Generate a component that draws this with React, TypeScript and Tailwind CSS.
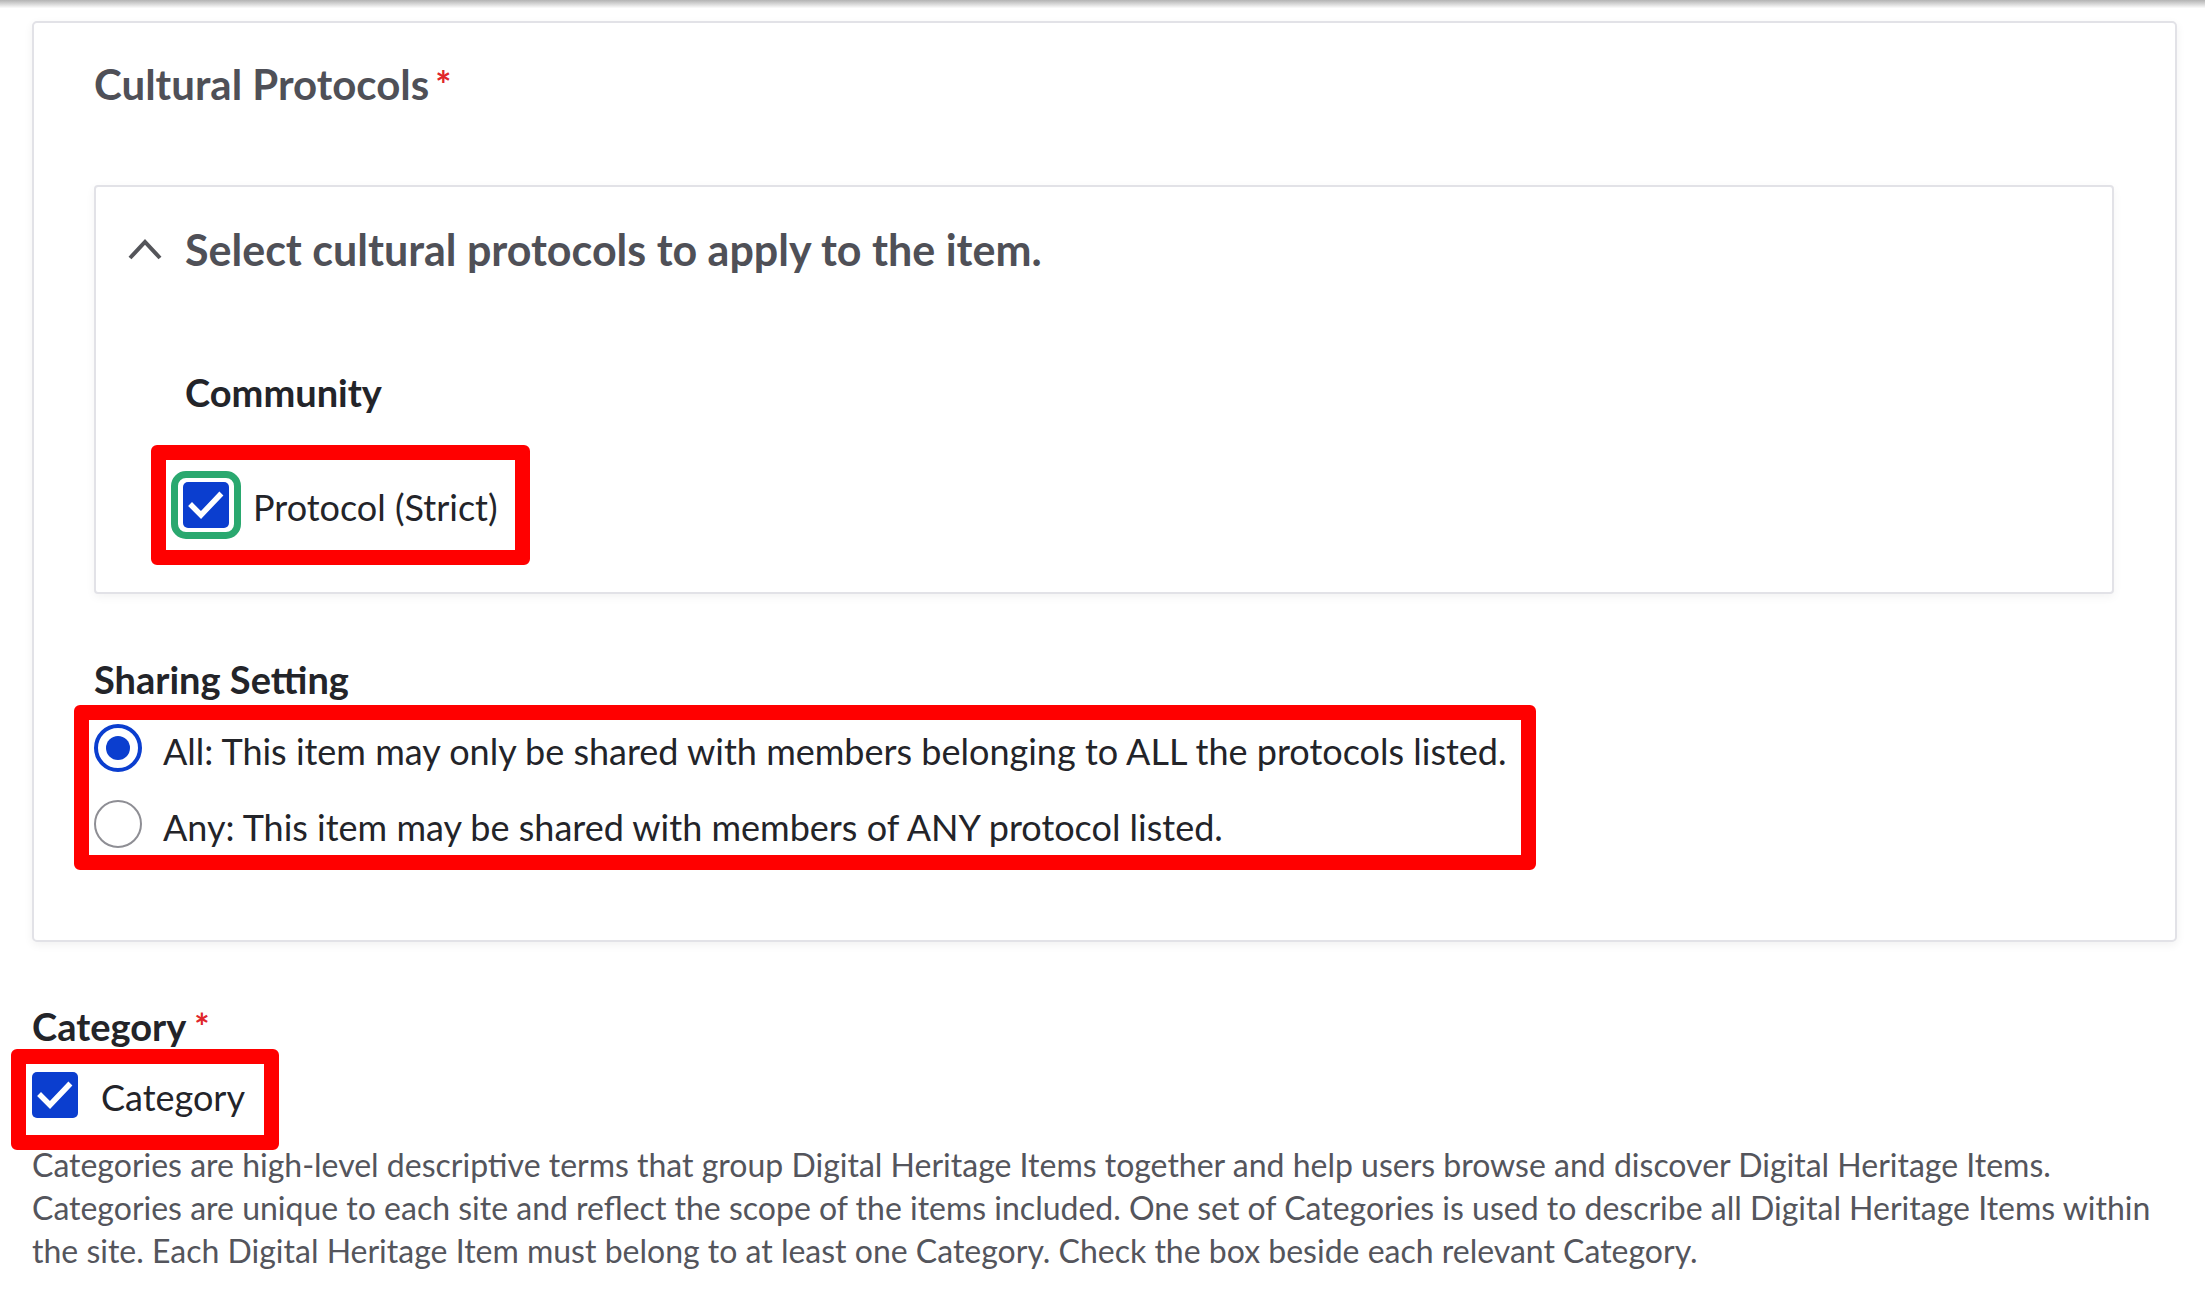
import React from 'react'

function CheckMark() {
    return (
        <svg className="w-[46px] h-[46px]" viewBox="0 0 46 46" fill="none">
            <path d="M9 24 L18 33 L36.5 13.5" stroke="white" strokeWidth={5.5} strokeLinecap="square" strokeLinejoin="miter" />
        </svg>
    )
}

function BlueCheckbox() {
    return (
        <div className="w-[46px] h-[46px] rounded-[5px] bg-[#0b3ecf] flex items-center justify-center shrink-0">
            <CheckMark />
        </div>
    )
}

function Radio({ checked }: { checked: boolean }) {
    return checked ? (
        <div className="w-[48px] h-[48px] rounded-full border-[4px] border-[#0b3ecf] flex items-center justify-center shrink-0">
            <div className="w-[24px] h-[24px] rounded-full bg-[#0b3ecf]" />
        </div>
    ) : (
        <div className="w-[48px] h-[48px] rounded-full border-2 border-[#8e8e94] shrink-0" />
    )
}

export default function App() {
    return (
        <div className="min-h-screen bg-white font-['Lato',sans-serif] text-[#232429]">
            {/* sombra de la cabecera */}
            <div className="h-[8px] bg-gradient-to-b from-[#b3b3b3] to-[#fcfcfc]" />

            <div className="pl-[32px] pr-[28px]">
                {/* Tarjeta de protocolos */}
                <section className="mt-[13px] rounded-[5px] border-2 border-[#e2e2e7] bg-white shadow-[0_3px_10px_rgba(0,0,0,0.06)] pl-[60px] pr-[61px] pt-[36px] pb-[70px]">
                    <h2 className="text-[42px] leading-[50px] font-bold text-[#4f5057]">
                        Cultural Protocols<span className="ml-[6px] text-[38px] align-top text-[#e0262b]">*</span>
                    </h2>

                    <div className="mt-[76px] rounded-[4px] border-2 border-[#e2e2e7] bg-white shadow-[0_3px_10px_rgba(0,0,0,0.05)] px-[32px] pt-[38px] pb-[27px]">
                        <div className="flex items-center gap-[23px]">
                            <svg className="w-[34px] h-[22px] shrink-0" viewBox="0 0 34 22" fill="none">
                                <polyline points="2,19 17,3 32,19" stroke="#54555a" strokeWidth={4} />
                            </svg>
                            <h3 className="text-[43px] leading-[50px] font-bold text-[#4f5057]">
                                Select cultural protocols to apply to the item.
                            </h3>
                        </div>

                        <div className="pl-[57px]">
                            <p className="mt-[94px] text-[38px] leading-[46px] font-bold">Community</p>

                            <div className="mt-[30px] -ml-[34px] w-fit rounded-[6px] border-[15px] border-[#ff0000] pl-[5px] pr-[17px] pt-[11px] pb-[11px] flex items-center gap-[12px]">
                                <div className="w-[70px] h-[68px] rounded-[15px] border-[7px] border-[#2aa86f] flex items-center justify-center">
                                    <BlueCheckbox />
                                </div>
                                <span className="text-[36px] leading-[44px] mt-[4px]">Protocol (Strict)</span>
                            </div>
                        </div>
                    </div>

                    <p className="mt-[62px] text-[38px] leading-[46px] font-bold">Sharing Setting</p>

                    <div className="mt-[3px] -ml-[20px] w-fit rounded-[6px] border-[15px] border-[#ff0000] pl-[5px] pr-[15px] pt-[3px] pb-[6px] flex flex-col gap-[26px]">
                        <div className="flex items-center gap-[21px]">
                            <Radio checked />
                            <span className="text-[36px] leading-[44px] mt-[6px]">
                                All: This item may only be shared with members belonging to ALL the protocols listed.
                            </span>
                        </div>
                        <div className="flex items-center gap-[21px]">
                            <Radio checked={false} />
                            <span className="text-[36px] leading-[44px] mt-[6px]">
                                Any: This item may be shared with members of ANY protocol listed.
                            </span>
                        </div>
                    </div>
                </section>

                {/* Categoría */}
                <p className="mt-[61px] text-[38px] leading-[46px] font-bold">
                    Category<span className="ml-[8px] text-[36px] align-top text-[#e0262b]">*</span>
                </p>

                <div className="mt-[0px] -ml-[21px] w-fit rounded-[6px] border-[15px] border-[#ff0000] pl-[6px] pr-[19px] pt-[8px] pb-[15px] flex items-start gap-[23px]">
                    <BlueCheckbox />
                    <span className="text-[36px] leading-[46px] mt-[2px]">Category</span>
                </div>

                <p className="-mt-[7px] text-[32px] leading-[43px] text-[#54555c]">
                    Categories are high-level descriptive terms that group Digital Heritage Items together and help users browse and discover Digital Heritage Items.
                    Categories are unique to each site and reflect the scope of the items included. One set of Categories is used to describe all Digital Heritage Items within
                    the site. Each Digital Heritage Item must belong to at least one Category. Check the box beside each relevant Category.
                </p>
            </div>
        </div>
    )
}
